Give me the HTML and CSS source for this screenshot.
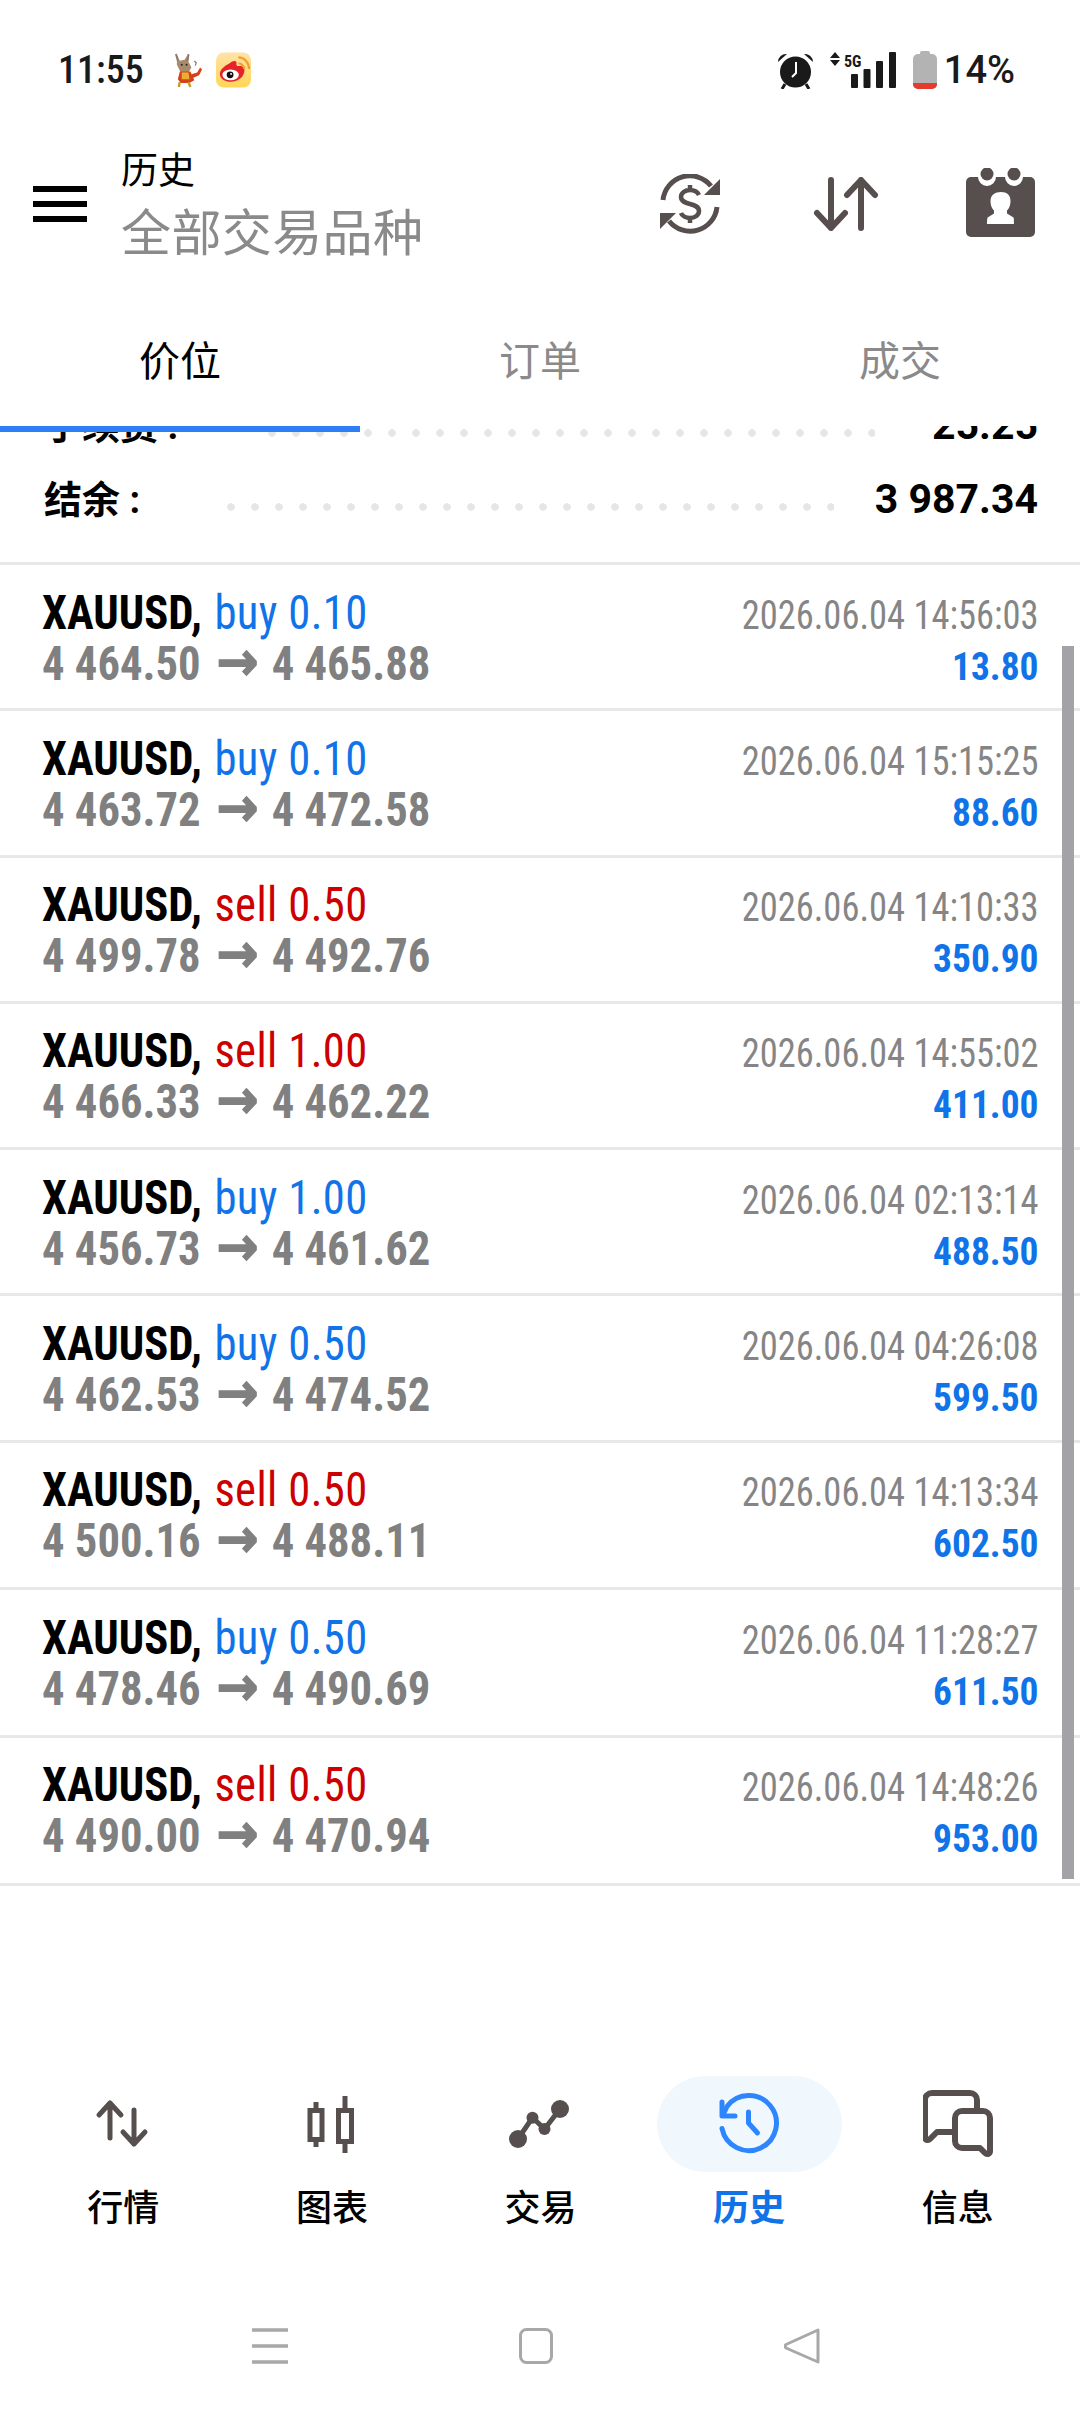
FILE: index.html
```html
<!DOCTYPE html>
<html lang="zh-CN">
<head>
    <meta charset="UTF-8">
    <title>历史</title>
    <link rel="stylesheet" href="styles.css">
</head>
<body>
<div class="phone">
    <!-- status bar -->
    <div class="status">
        <span class="clock">11:55</span>
        <svg class="mascot" viewBox="0 0 30 36">
            <path d="M3 2l3 6 5-1 3-5 1 7 3 6-3 5H7L3 12z" fill="#a98a6c"/>
            <path d="M2 1l2 7M15 1l-1 7" stroke="#8a7a6a" stroke-width="2"/>
            <path d="M6 19h11l4 9-5 3H7l-3-4z" fill="#d8401c"/>
            <path d="M8 20h7l1 7H8z" fill="#e8b030"/>
            <path d="M18 22l6-2 3-5 2 2-3 6-7 3z" fill="#d8401c"/>
            <path d="M6 30l-1 5M15 30l2 5" stroke="#c89a2a" stroke-width="2.500"/>
            <path d="M21 8l2 2-1 3" fill="none" stroke="#777" stroke-width="1.200"/>
            <circle cx="8" cy="12" r="1" fill="#222"/>
            <circle cx="13" cy="12" r="1" fill="#222"/>
        </svg>
        <svg class="weibo" viewBox="0 0 36 36">
            <defs>
                <linearGradient id="wb" x1="0" y1="0" x2="0" y2="1">
                    <stop offset="0" stop-color="#ffe3a6"/>
                    <stop offset="1" stop-color="#ffd658"/>
                </linearGradient>
            </defs>
            <rect width="36" height="36" rx="8" fill="url(#wb)"/>
            <path d="M14 11c4-3 8-3 7 1 0 2 1 2 3 2 4 0 6 2 5 6-1 6-7 10-14 10-6 0-11-3-11-8 0-4 4-8 10-11z" fill="#e6232a"/>
            <ellipse cx="15" cy="23" rx="8.500" ry="5.500" fill="#fff"/>
            <circle cx="14.500" cy="23" r="3.500" fill="#111"/>
            <circle cx="15.500" cy="22" r="1" fill="#fff"/>
            <path d="M23 11c3 0 6 3 6 6M23 5c6 0 11 5 11 12" fill="none" stroke="#f0a030" stroke-width="2.200"/>
        </svg>
        <span class="status-right">
            <svg class="alarm" viewBox="0 0 37 38">
                <path d="M1 11a8 8 0 0 1 9-8zM36 11a8 8 0 0 0-9-8z" fill="#1a1a1a"/>
                <circle cx="18.500" cy="21" r="15.500" fill="#1a1a1a"/>
                <path d="M8 33l-3 5M29 33l3 5" stroke="#1a1a1a" stroke-width="3"/>
                <path d="M19 11v11l-4 4" fill="none" stroke="#fff" stroke-width="2"/>
            </svg>
            <svg class="signal" viewBox="0 0 66 36">
                <path d="M5 0l5 6H0zM5 14l5-6H0z" fill="#1a1a1a"/>
                <text x="14" y="15" class="five-g">5G</text>
                <rect x="21" y="22" width="7" height="14" rx="1" fill="#1a1a1a"/>
                <rect x="33.500" y="17" width="7" height="19" rx="1" fill="#1a1a1a"/>
                <rect x="46" y="9" width="7" height="27" rx="1" fill="#1a1a1a"/>
                <rect x="59" y="0" width="7" height="36" rx="1" fill="#1a1a1a"/>
            </svg>
            <span class="battery"><span class="battery-nub"></span><span class="battery-body"><span class="battery-level"></span></span></span>
            <span class="percent">14%</span>
        </span>
    </div>

    <!-- toolbar -->
    <div class="toolbar">
        <div class="burger"><span></span><span></span><span></span></div>
        <div class="titles">
            <div class="title">历史</div>
            <div class="subtitle">全部交易品种</div>
        </div>
        <div class="actions">
            <svg class="act-swap" viewBox="0 0 60 60">
                <g fill="none" stroke="#574f4d" stroke-width="5">
                    <path d="M3 26A27 27 0 0 1 51 12"/>
                    <path d="M57 33A27 27 0 0 1 9 47"/>
                </g>
                <path d="M60 5v16H44zM0 39h16L0 55z" fill="#574f4d"/>
                <path d="M39 21c-1.500-3-5-5-9-5-5 0-9 3-9 7 0 9 18 5 18 14 0 4-4 7-9 7-4 0-8-2-9-5M30 11v5M30 44v5" fill="none" stroke="#574f4d" stroke-width="4.500"/>
            </svg>
            <svg class="act-sort" viewBox="0 0 66 54">
                <g fill="none" stroke="#574f4d" stroke-width="6" stroke-linecap="round" stroke-linejoin="round">
                    <path d="M18 3v48M4 36l14 15 14-15"/>
                    <path d="M48 51V3M34 18L48 3l14 15"/>
                </g>
            </svg>
            <svg class="act-cal" viewBox="0 0 69 69">
                <rect y="9" width="69" height="60" rx="5" fill="#574f4d"/>
                <path d="M12 9a9 9 0 0 0 18 0zM39 9a9 9 0 0 0 18 0z" fill="#fff"/>
                <circle cx="21" cy="6" r="6.500" fill="#574f4d"/>
                <circle cx="48" cy="6" r="6.500" fill="#574f4d"/>
                <path d="M35 24c6 0 9.500 3 9.500 9 0 4-1.200 7.500-3.500 9.500v3l6.500 4c.5.500.5 6.500.5 6.500H21s0-6 .7-6.500l6.300-4v-3c-2.300-2-3.500-5.500-3.500-9.500 0-6 4.500-9 10.500-9z" fill="#fff"/>
            </svg>
        </div>
    </div>

    <!-- tabs -->
    <div class="tabs">
        <div class="tab tab-on">价位</div>
        <div class="tab">订单</div>
        <div class="tab">成交</div>
    </div>

    <div class="content">
        <div class="tab-line"></div>
        <div class="sum-row sum-cut">
            <span class="sum-label">手续费 :</span><span class="dots"></span><span class="sum-value">25.25</span>
        </div>
        <div class="sum-row">
            <span class="sum-label">结余 :</span><span class="dots"></span><span class="sum-value">3 987.34</span>
        </div>

        <div class="deals">
            <div class="deal"><div class="line1"><span class="sym">XAUUSD,</span> <span class="buy">buy 0.10</span></div><div class="date">2026.06.04 14:56:03</div><div class="price">4 464.50 <span class="arrow">→</span> 4 465.88</div><div class="profit">13.80</div></div>
            <div class="deal"><div class="line1"><span class="sym">XAUUSD,</span> <span class="buy">buy 0.10</span></div><div class="date">2026.06.04 15:15:25</div><div class="price">4 463.72 <span class="arrow">→</span> 4 472.58</div><div class="profit">88.60</div></div>
            <div class="deal"><div class="line1"><span class="sym">XAUUSD,</span> <span class="sell">sell 0.50</span></div><div class="date">2026.06.04 14:10:33</div><div class="price">4 499.78 <span class="arrow">→</span> 4 492.76</div><div class="profit">350.90</div></div>
            <div class="deal"><div class="line1"><span class="sym">XAUUSD,</span> <span class="sell">sell 1.00</span></div><div class="date">2026.06.04 14:55:02</div><div class="price">4 466.33 <span class="arrow">→</span> 4 462.22</div><div class="profit">411.00</div></div>
            <div class="deal"><div class="line1"><span class="sym">XAUUSD,</span> <span class="buy">buy 1.00</span></div><div class="date">2026.06.04 02:13:14</div><div class="price">4 456.73 <span class="arrow">→</span> 4 461.62</div><div class="profit">488.50</div></div>
            <div class="deal"><div class="line1"><span class="sym">XAUUSD,</span> <span class="buy">buy 0.50</span></div><div class="date">2026.06.04 04:26:08</div><div class="price">4 462.53 <span class="arrow">→</span> 4 474.52</div><div class="profit">599.50</div></div>
            <div class="deal"><div class="line1"><span class="sym">XAUUSD,</span> <span class="sell">sell 0.50</span></div><div class="date">2026.06.04 14:13:34</div><div class="price">4 500.16 <span class="arrow">→</span> 4 488.11</div><div class="profit">602.50</div></div>
            <div class="deal"><div class="line1"><span class="sym">XAUUSD,</span> <span class="buy">buy 0.50</span></div><div class="date">2026.06.04 11:28:27</div><div class="price">4 478.46 <span class="arrow">→</span> 4 490.69</div><div class="profit">611.50</div></div>
            <div class="deal"><div class="line1"><span class="sym">XAUUSD,</span> <span class="sell">sell 0.50</span></div><div class="date">2026.06.04 14:48:26</div><div class="price">4 490.00 <span class="arrow">→</span> 4 470.94</div><div class="profit">953.00</div></div>
        </div>
        <div class="scrollbar"></div>
    </div>

    <!-- bottom nav -->
    <div class="nav">
        <div class="nav-item">
            <div class="nav-icon"><svg viewBox="0 0 70 70"><g fill="none" stroke="#574f4d" stroke-width="5" stroke-linecap="round" stroke-linejoin="round"><path d="M22 49V14M11 26l11-12 11 12"/><path d="M46 21v34M35 43l11 12 11-12"/></g></svg></div>
            <div class="nav-label">行情</div>
        </div>
        <div class="nav-item">
            <div class="nav-icon"><svg viewBox="0 0 70 70"><g fill="none" stroke="#574f4d" stroke-width="5"><rect x="13" y="21.500" width="12" height="29"/><rect x="41.500" y="21.500" width="13" height="31"/><path d="M19 13v8.500M19 50.500V58M48 7v14.500M48 52.500V64"/></g></svg></div>
            <div class="nav-label">图表</div>
        </div>
        <div class="nav-item">
            <div class="nav-icon"><svg viewBox="0 0 70 70"><path d="M13 50l14.500-21.500 12 11.500 15.500-20" fill="none" stroke="#574f4d" stroke-width="5"/><circle cx="13" cy="50" r="9" fill="#574f4d"/><circle cx="27.500" cy="28.700" r="6" fill="#574f4d"/><circle cx="39.500" cy="40" r="6" fill="#574f4d"/><circle cx="55" cy="20" r="9" fill="#574f4d"/></svg></div>
            <div class="nav-label">交易</div>
        </div>
        <div class="nav-item nav-on">
            <div class="nav-icon"><svg viewBox="0 0 70 70"><g fill="none" stroke="#2e86ff" stroke-width="5" stroke-linecap="round" stroke-linejoin="round"><path d="M8 39.500A27.500 27.500 0 1 0 13 17.500L9 26"/><path d="M8 13v14h13"/><path d="M34.500 23v11l9 10"/></g></svg></div>
            <div class="nav-label">历史</div>
        </div>
        <div class="nav-item">
            <div class="nav-icon"><svg viewBox="0 0 70 70"><g fill="none" stroke="#574f4d" stroke-width="6" stroke-linejoin="round"><path d="M54 19v-8a7 7 0 0 0-7-7H9a7 7 0 0 0-7 7v37c0 3 3 4 5 2l7-7h17"/><path d="M39 22h21a7 7 0 0 1 7 7v33c0 3-3 4-5 2l-5-5H39a7 7 0 0 1-7-7V29a7 7 0 0 1 7-7z"/></g></svg></div>
            <div class="nav-label">信息</div>
        </div>
    </div>

    <!-- system buttons -->
    <div class="sysbar">
        <svg class="sys" viewBox="0 0 36 36"><path d="M0 2h36M0 18h36M0 34h36" stroke="#a8a8a8" stroke-width="3.500" fill="none"/></svg>
        <svg class="sys" viewBox="0 0 36 36"><rect x="2.500" y="1.500" width="31" height="33" rx="6" fill="none" stroke="#a8a8a8" stroke-width="3"/></svg>
        <svg class="sys" viewBox="0 0 36 36"><path d="M34 2v32L2 20a2.500 2.500 0 0 1 0-3.500z" fill="none" stroke="#a8a8a8" stroke-width="3" stroke-linejoin="round"/></svg>
    </div>
</div>
</body>
</html>
```

FILE: styles.css
```css
* {
    box-sizing: border-box;
}

html, body {
    margin: 0;
    padding: 0;
    background: #fff;
}

.phone {
    width: 1080px;
    height: 2412px;
    overflow: hidden;
    display: flex;
    flex-direction: column;
    font-family: Roboto, "Noto Sans CJK SC", sans-serif;
}

/* status bar */
.status {
    height: 130px;
    flex: none;
    display: flex;
    align-items: center;
    padding: 10px 65px 0 58px;
}

.clock {
    font-size: 38px;
    font-weight: 500;
    font-stretch: 87%;
    color: #1a1a1a;
    width: 116px;
}

.mascot {
    width: 29px;
    height: 35px;
    margin-right: 13px;
}

.weibo {
    width: 35px;
    height: 36px;
}

.status-right {
    margin-left: auto;
    display: flex;
    align-items: center;
}

.alarm {
    width: 37px;
    height: 38px;
    margin-right: 16px;
}

.signal {
    width: 66px;
    height: 36px;
    margin-right: 17px;
}

.five-g {
    font-size: 16px;
    font-weight: 700;
    font-stretch: 75%;
    fill: #1a1a1a;
}

.battery {
    width: 24px;
    height: 38px;
    display: flex;
    flex-direction: column;
    align-items: center;
    margin-right: 7px;
}

.battery-nub {
    width: 10px;
    height: 3px;
    background: #b3b3b3;
    border-radius: 2px 2px 0 0;
}

.battery-body {
    width: 24px;
    flex: 1;
    border-radius: 5px;
    background: #b3b3b3;
    display: flex;
    align-items: flex-end;
    overflow: hidden;
}

.battery-level {
    width: 100%;
    height: 6px;
    background: #e53a2e;
}

.percent {
    font-size: 38px;
    font-weight: 500;
    color: #1a1a1a;
}

/* toolbar */
.toolbar {
    height: 147px;
    flex: none;
    display: flex;
    align-items: center;
    padding: 0 45px 0 33px;
}

.burger {
    width: 54px;
    display: flex;
    flex-direction: column;
    gap: 9px;
    margin-top: 1px;
}

.burger span {
    display: block;
    height: 6px;
    background: #000;
}

.titles {
    margin: 6px 0 0 34px;
}

.title {
    font-size: 37px;
    line-height: 44px;
    color: #000;
}

.subtitle {
    font-size: 50px;
    line-height: 58px;
    margin-top: 11px;
    letter-spacing: 0.4px;
    color: #8a8a8a;
}

.actions {
    margin-left: auto;
    display: flex;
    align-items: center;
}

.act-swap {
    width: 60px;
    height: 60px;
    margin-right: 93px;
}

.act-sort {
    width: 66px;
    height: 54px;
    margin-right: 87px;
}

.act-cal {
    width: 69px;
    height: 69px;
    margin-top: -2px;
}

/* tabs */
.tabs {
    height: 149px;
    flex: none;
    display: grid;
    grid-template-columns: repeat(3, 1fr);
    background: #fff;
    position: relative;
    z-index: 2;
}

.tab {
    font-size: 41px;
    line-height: 60px;
    padding-top: 55px;
    color: #8a8a8a;
    text-align: center;
}

.tab-on {
    color: #000;
}

/* list */
.content {
    position: relative;
    height: 1650px;
    flex: none;
    overflow: hidden;
}

.tab-line {
    position: absolute;
    top: 0;
    left: 0;
    width: 360px;
    height: 6px;
    background: #2e7ff6;
    z-index: 3;
}

.sum-row {
    display: flex;
    align-items: center;
    height: 74px;
    padding: 0 42px 0 44px;
    color: #000;
    font-weight: 700;
}

.sum-cut {
    margin-top: -38px;
}

.sum-label {
    font-size: 38px;
    width: 183px;
    flex: none;
    margin-bottom: 6px;
}

.sum-cut .sum-label {
    width: 224px;
}

.dots {
    width: 607px;
    height: 8px;
    margin-top: 16px;
    flex: none;
    background: radial-gradient(circle at 4px 4px, #e6e6e6 3.500px, transparent 4px) 0 0 / 24px 8px repeat-x;
}

.sum-value {
    margin-left: auto;
    font-size: 41px;
}

.deals {
    margin-top: 26px;
    border-top: 3px solid #e8e8e8;
}

.deal {
    height: 146.300px;
    border-bottom: 3px solid #e8e8e8;
    padding: 21.500px 41px 0 42px;
    display: grid;
    grid-template-columns: 1fr auto;
    grid-template-rows: 51px 51px;
    align-items: baseline;
    font-stretch: 75%;
    line-height: 51px;
}

/* the last rows sit a little further apart in the screenshot */
.deal:nth-child(n+7) {
    height: 147.600px;
}

.line1, .price {
    font-size: 48px;
    white-space: pre;
    transform: scaleX(0.93);
    transform-origin: left;
}

.sym {
    font-weight: 700;
    color: #000;
}

.buy, .sell {
    margin-left: 2.500px;
    letter-spacing: 0.4px;
}

.buy {
    color: #1173e8;
}

.sell {
    color: #cc0000;
}

.date {
    font-size: 41px;
    color: #858585;
    transform: scaleX(0.89);
    transform-origin: right;
}

.price {
    font-weight: 700;
    color: #808080;
}

.arrow {
    font-family: "DejaVu Sans", sans-serif;
    font-stretch: normal;
    font-size: 54px;
    line-height: 40px;
    margin: 0 3px 0 6px;
    -webkit-text-stroke: 1.500px #808080;
}

.profit {
    font-size: 39px;
    font-weight: 700;
    color: #1173e8;
    text-align: right;
    transform: scaleX(0.96);
    transform-origin: right;
}

.scrollbar {
    position: absolute;
    right: 6px;
    top: 220px;
    width: 12px;
    height: 1233px;
    background: #a3a2a6;
}

/* bottom nav */
.nav {
    height: 252px;
    flex: none;
    display: grid;
    grid-template-columns: repeat(5, 1fr);
    padding: 0 18px 0 19px;
}

.nav-item {
    display: flex;
    flex-direction: column;
    align-items: center;
}

.nav-icon {
    width: 185px;
    height: 96px;
    border-radius: 48px;
    display: flex;
    align-items: center;
    justify-content: center;
}

.nav-icon svg {
    width: 70px;
    height: 70px;
}

.nav-on .nav-icon {
    background: #f0f8fe;
}

.nav-label {
    font-size: 36px;
    font-weight: 500;
    line-height: 44px;
    margin-top: 15px;
    color: #000;
}

.nav-on .nav-label {
    color: #1173e8;
    font-weight: 700;
}

.sysbar {
    flex: 1;
    display: flex;
    justify-content: center;
    gap: 230px;
    padding-right: 8px;
}

.sys {
    width: 36px;
    height: 36px;
}
```
